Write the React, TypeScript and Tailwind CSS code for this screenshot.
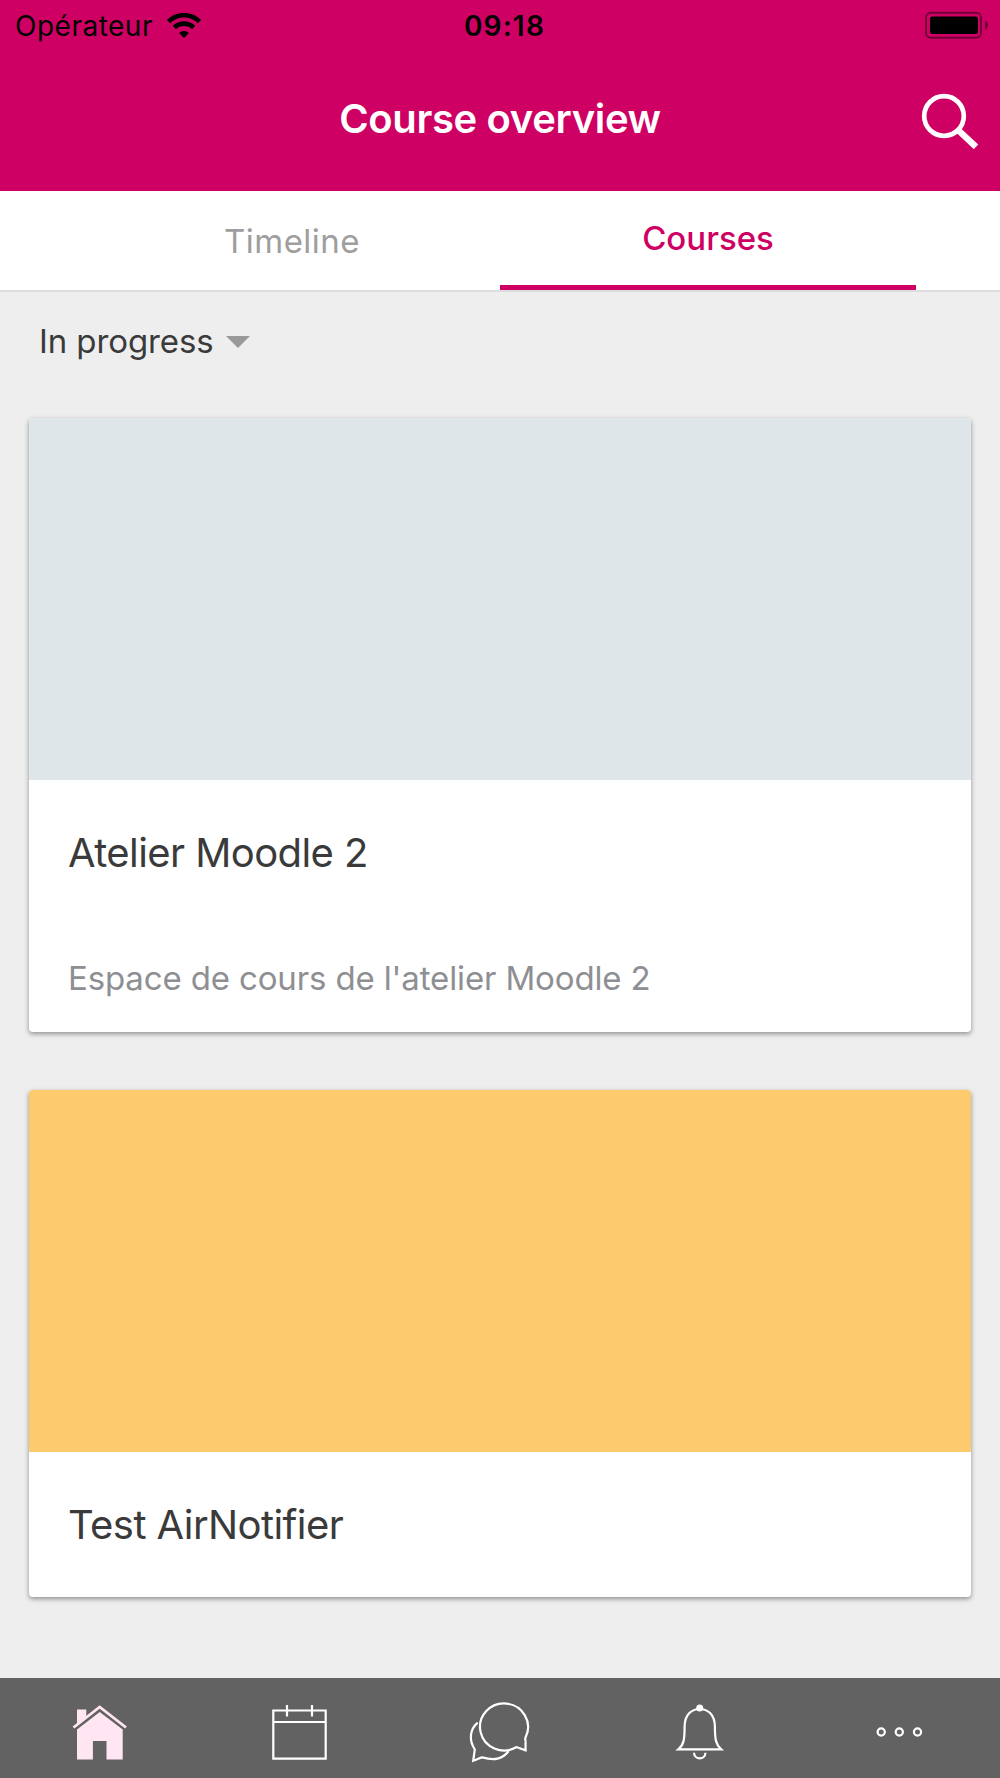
import type { ReactNode } from 'react';

interface Course {
  title: string;
  summary?: string;
  color: string;
}

const courses: Course[] = [
  {
    title: 'Atelier Moodle 2',
    summary: "Espace de cours de l'atelier Moodle 2",
    color: 'bg-[#dfe6e9]',
  },
  { title: 'Test AirNotifier', color: 'bg-[#fdcb6e]' },
];

function StatusBar() {
  return (
    <div className="grid grid-cols-3 items-center h-[50px] pl-[15px] pr-3 text-[28px] leading-[50px] text-black">
      <div className="flex items-center">
        <span className="tracking-[0.5px] pt-px">Opérateur</span>
        <svg className="ml-[13px]" width="36" height="26" viewBox="0 0 36 26" fill="none" stroke="black">
          <path d="M2.5 8.6a22 22 0 0 1 31 0" strokeWidth="4.6" />
          <path d="M8.3 14.5a14 14 0 0 1 19.4 0" strokeWidth="4.6" />
          <path d="M18 25l-5-5.1a7.3 7.3 0 0 1 10 0z" fill="black" stroke="none" />
        </svg>
      </div>
      <span className="text-center pl-[6px] pt-px font-semibold tracking-[1.2px]">09:18</span>
      <svg className="justify-self-end -mt-[2px]" width="63" height="28" viewBox="0 0 63 28">
        <rect x="1" y="1.7" width="55" height="25" rx="5" fill="none" stroke="#720037" strokeWidth="2" />
        <rect x="5" y="5.5" width="48" height="17.5" rx="2.5" fill="black" />
        <path d="M60 9.500c4 2 4 7.500 0 9.500z" fill="#720037" />
      </svg>
    </div>
  );
}

function Header() {
  return (
    <header className="h-[191px] bg-[#cf0063]">
      <StatusBar />
      <div className="grid grid-cols-[80px_1fr_80px] items-center h-[138px] text-white">
        <h1 className="col-start-2 -mt-px text-center text-[40px] font-semibold tracking-[-0.35px]">
          Course overview
        </h1>
        <svg className="ml-[1px]" width="60" height="60" viewBox="0 0 60 60" fill="none" stroke="white">
          <circle cx="23" cy="27" r="19.800" strokeWidth="4.700" />
          <path d="M36.500 40.500l18.500 17.300" strokeWidth="6.500" />
        </svg>
      </div>
    </header>
  );
}

function Tabs() {
  return (
    <nav className="grid grid-cols-[416px_416px] justify-center h-[101px] bg-white border-b-2 border-[#dddddd] text-[33px] text-center">
      <button className="leading-[100px] text-[#9e9e9e] tracking-[0.45px]">Timeline</button>
      <button className="leading-[95px] h-[99px] text-[#cf0063] font-medium border-b-[5px] border-[#cf0063]">
        Courses
      </button>
    </nav>
  );
}

function CourseCard({ course }: { course: Course }) {
  return (
    <article className="rounded-[4px] overflow-hidden bg-white shadow-[0_2px_5px_rgba(0,0,0,0.4)]">
      <div className={`h-[362px] ${course.color}`} />
      <div className="px-[39px]">
        <h2 className="h-[145px] leading-[145px] text-[40px] text-[#3a3a3a] tracking-[-0.58px]">
          {course.title}
        </h2>
        {course.summary && (
          <p className="h-[107px] leading-[107px] text-[33px] text-[#8e8f93] tracking-[-0.14px]">
            {course.summary}
          </p>
        )}
      </div>
    </article>
  );
}

function TabIcon({ children }: { children: ReactNode }) {
  return (
    <button className="flex justify-center items-center">
      <svg width="80" height="100" viewBox="0 0 80 100" fill="none" stroke="white" strokeWidth="2.200">
        {children}
      </svg>
    </button>
  );
}

function BottomBar() {
  return (
    <nav className="grid grid-cols-5 h-[100px] bg-[#626262]">
      <TabIcon>
        <path d="M17 50V31.500h9.300v9L17 48z" fill="#ffe6f2" stroke="none" />
        <path d="M13.500 49.500L39.700 29l26.300 20.500" stroke="#ffe6f2" strokeWidth="2.800" />
        <path d="M17 51.500L39.700 34l23 17.500V81.500H46.500v-18.500h-13.600v18.500H17z" fill="#ffe6f2" stroke="none" />
      </TabIcon>
      <TabIcon>
        <path d="M13.300 32.500h52.400v48.200H13.300zM13.300 44h52.400M27 27v11.500M52 27v11.500" />
      </TabIcon>
      <TabIcon>
        <path d="M65.700 63.400c-.9-2.400-.7-3.300.3-5A24 23.500 0 1 0 56.200 69.200c2 .2 5 1.900 9.400 3.200 0-3-.2-6 .1-9" />
        <path d="M17.700 44.700C9.700 51.500 8.700 62 14.800 71.500l-1.600 11.300c5.200-2 6.400-3 9-3.400 12 3.400 20 2 26.500-6.400" />
      </TabIcon>
      <TabIcon>
        <path d="M18.300 71.400c5.500-4.500 6.300-10 6.300-22.700 0-12 7-17.700 15.100-17.700S54.900 36.700 54.900 48.700c0 12.700 1 18.200 6.300 22.700z" />
        <circle cx="39.700" cy="30" r="3.500" fill="white" stroke="none" />
        <path d="M34 74.700c.5 7.500 11 7.500 11.500 0" />
      </TabIcon>
      <TabIcon>
        <circle cx="21.200" cy="54" r="3.600" />
        <circle cx="39.300" cy="54" r="3.600" />
        <circle cx="57.500" cy="54" r="3.600" />
      </TabIcon>
    </nav>
  );
}

export default function App() {
  return (
    <div className="flex flex-col w-[1000px] h-[1778px] overflow-hidden bg-[#eeeeee] font-[Inter,sans-serif]">
      <Header />
      <Tabs />
      <main className="flex-1 px-[29px]">
        <button className="flex items-center h-[100px] mb-[26px] pl-[10px] text-[33px] text-[#3a3a3a] tracking-[-0.1px]">
          In progress
          <svg className="ml-[12px]" width="24" height="12" viewBox="0 0 24 12">
            <path d="M0 0h24L12 12z" fill="#999999" />
          </svg>
        </button>
        <div className="flex flex-col gap-[58px]">
          {courses.map((course) => (
            <CourseCard key={course.title} course={course} />
          ))}
        </div>
      </main>
      <BottomBar />
    </div>
  );
}
